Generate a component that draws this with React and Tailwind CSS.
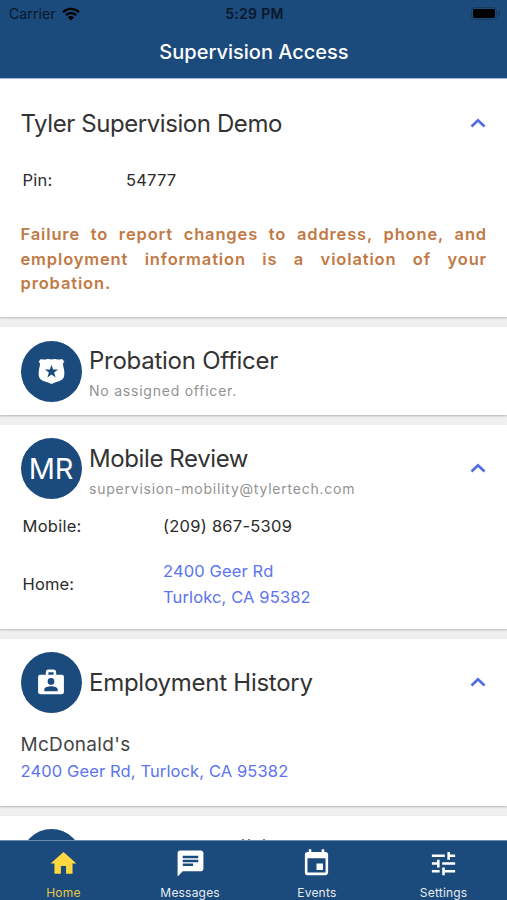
import React from "react";
import { MdChat, MdEvent, MdHome, MdTune } from "react-icons/md";

const PoliceBadgeIcon = () => (
  <svg viewBox="0 0 27 27" className="w-[27px] h-[27px]" fill="white">
    <path
      fillRule="evenodd"
      d="M3 1 C4.8 1.7 7 1.7 8.6 1.2 C10.5 .9 11.5 1.5 13.5 1.5 C15.5 1.5 16.5 .9 18.4 1.2 C20 1.7 22.2 1.7 24 1 L26.4 3.6 C24.9 5 24.8 6.5 25.3 8.3 C26.4 12.5 26.9 16.5 25.7 19.4 C24.2 22.4 20.5 23.2 17.6 24.2 C15.7 24.9 14.5 25.8 13.5 25.8 C12.5 25.8 11.3 24.9 9.4 24.2 C6.5 23.2 2.8 22.4 1.3 19.4 C.1 16.5 .6 12.5 1.7 8.3 C2.2 6.5 2.1 5 .6 3.6Z M13.5 6.8 L11.9 11.5 L6.9 11.6 L10.9 14.6 L9.4 19.4 L13.5 16.5 L17.6 19.4 L16.1 14.6 L20.1 11.6 L15.1 11.5Z"
    />
  </svg>
);

const BriefcaseAccountIcon = () => (
  <svg viewBox="0 0 24 24" className="w-[32px] h-[31px]" fill="white">
    <path
      fillRule="evenodd"
      d="M14 6V4H10V6H14M20 6C21.11 6 22 6.5 22 7.5V19.5C22 20.5 21.11 21 20 21H4C2.89 21 2 20.5 2 19.5V7.5C2 6.5 2.89 6 4 6H8V4C8 2.89 8.89 2 10 2H14C15.11 2 16 2.89 16 4V6H20M17.2 18.8V17.4C17.2 15.7 14.33 14.9 12 14.9S6.8 15.7 6.8 17.4V18.8H17.2M12 8.6A2.6 2.6 0 1 0 12 13.8A2.6 2.6 0 0 0 12 8.6Z"
    />
  </svg>
);

const Chevron = () => (
  <svg viewBox="0 0 16 10" className="w-4 h-[10px] ml-auto mr-[1.5px] mb-[2px]" fill="none">
    <path d="M1.5 8.5L8 2.2L14.5 8.5" stroke="#5069e6" strokeWidth="2.6" />
  </svg>
);

const Avatar = ({ children }) => (
  <div className="w-[61px] h-[61px] shrink-0 rounded-full bg-[#1b4a7c] text-white flex items-center justify-center">
    {children}
  </div>
);

const Card = ({ className, children }) => (
  <section
    className={`bg-white shrink-0 pl-[20.5px] pr-[20px] shadow-[0_1px_2px_rgba(0,0,0,0.25)] ${className}`}
  >
    {children}
  </section>
);

const Title = ({ tracking = "tracking-[-0.26px]", children }) => (
  <h2
    className={`text-[24px] leading-[30px] font-[430] text-[#333] whitespace-nowrap ${tracking}`}
  >
    {children}
  </h2>
);

const Subtitle = ({ children }) => (
  <p className="mt-[5px] text-[14px] leading-5 tracking-[0.77px] text-[#929292] whitespace-nowrap">
    {children}
  </p>
);

const tabs = [
  { label: "Home", Icon: MdHome, color: "text-[#ffd740]" },
  { label: "Messages", Icon: MdChat, color: "text-white" },
  { label: "Events", Icon: MdEvent, color: "text-white" },
  { label: "Settings", Icon: MdTune, color: "text-white" },
];

const App = () => {
  return (
    <div className="w-[507px] h-[900px] flex flex-col overflow-hidden bg-[#f0f0f0] font-['Inter','Liberation_Sans',sans-serif]">
      <header className="h-[79px] shrink-0 bg-[#1b4a7c] border-b border-[#9db6ee]">
        <div className="h-[27px] grid grid-cols-3 items-center pl-[9px] pr-[7px] text-[14px] text-[#08182b]">
          <div className="flex items-center gap-[6px]">
            <span className="tracking-[0.1px]">Carrier</span>
            <svg viewBox="0 0 18 14" className="w-[18px] h-[14px]" fill="none">
              <path
                d="M1 5.2C5.5 .8 12.5 .8 17 5.2M3.8 8.2C6.8 5.3 11.2 5.3 14.2 8.2"
                stroke="black"
                strokeWidth="2.3"
              />
              <path d="M5.8 10.2Q9 7.6 12.2 10.2L9 13.5Z" fill="black" />
            </svg>
          </div>
          <span className="text-center font-semibold tracking-[0.3px]">5:29 PM</span>
          <div className="flex items-center justify-end gap-[1px]">
            <div className="w-[26px] h-[13px] rounded-[4px] border border-[#153b60] p-[1px]">
              <div className="w-full h-full rounded-[2px] bg-black" />
            </div>
            <div className="w-[2px] h-[5px] rounded-r-full bg-[#153b60]" />
          </div>
        </div>
        <h1 className="text-center text-[20px] leading-[51px] font-medium text-white pl-px">
          Supervision Access
        </h1>
      </header>

      <main className="flex-1 min-h-0 overflow-hidden flex flex-col gap-[10px]">
        <Card className="h-[238px] pt-[30px]">
          <div className="flex items-center">
            <Title tracking="tracking-[-0.42px]">Tyler Supervision Demo</Title>
            <Chevron />
          </div>
          <div className="mt-[29px] pl-[2px] flex text-[16.5px] leading-6 tracking-[0.2px] text-[#2b2b2b]">
            <span className="w-[103.5px]">Pin:</span>
            <span>54777</span>
          </div>
          <p className="mt-[30px] text-justify text-[16.5px] leading-[24.5px] font-semibold tracking-[0.85px] text-[#c17a45]">
            Failure to report changes to address, phone, and employment
            information is a violation of your probation.
          </p>
        </Card>

        <Card className="h-[88px] pt-[13.5px]">
          <div className="flex gap-[7.5px]">
            <Avatar>
              <PoliceBadgeIcon />
            </Avatar>
            <div className="pt-[5px]">
              <Title>Probation Officer</Title>
              <Subtitle>No assigned officer.</Subtitle>
            </div>
          </div>
        </Card>

        <Card className="h-[204px] pt-[13px]">
          <div className="flex items-center gap-[7.5px]">
            <Avatar>
              <span className="text-[29px] tracking-[-0.3px]">MR</span>
            </Avatar>
            <div className="pt-[5px]">
              <Title tracking="tracking-[-0.4px]">Mobile Review</Title>
              <Subtitle>supervision-mobility@tylertech.com</Subtitle>
            </div>
            <Chevron />
          </div>
          <div className="mt-[15px] pl-[2px] flex text-[16.5px] leading-6 tracking-[0.25px] text-[#2b2b2b]">
            <span className="w-[140.5px]">Mobile:</span>
            <span>(209) 867-5309</span>
          </div>
          <div className="mt-5 pl-[2px] flex items-center text-[16.5px] leading-[26px] tracking-[0.13px] text-[#2b2b2b]">
            <span className="w-[140.5px]">Home:</span>
            <span className="text-[#5c74ee]">
              2400 Geer Rd
              <br />
              Turlokc, CA 95382
            </span>
          </div>
        </Card>

        <Card className="h-[167px] pt-[13px]">
          <div className="flex items-center gap-[7.5px]">
            <Avatar>
              <BriefcaseAccountIcon />
            </Avatar>
            <Title>Employment History</Title>
            <Chevron />
          </div>
          <p className="mt-[19px] text-[19px] leading-[26px] tracking-[0.3px] text-[#444]">
            McDonald's
          </p>
          <p className="text-[16.5px] leading-[27px] tracking-[0.12px] text-[#5c74ee]">
            2400 Geer Rd, Turlock, CA 95382
          </p>
        </Card>

        {/* next card, mostly scrolled under the tab bar */}
        <Card className="h-[88px] pt-[13px]">
          <div className="flex">
            <Avatar />
            <svg viewBox="0 0 24 2" className="w-6 h-[2px] ml-[160px] mt-[10px]" fill="#777">
              <path d="M0 0H2V2H0ZM6 0H8V2H6ZM21 0H23V2H21Z" />
            </svg>
          </div>
        </Card>
      </main>

      <nav className="h-[60px] shrink-0 grid grid-cols-4 bg-[#1b4a7c] border-t border-[#6f8cab]">
        {tabs.map(({ label, Icon, color }) => (
          <div key={label} className={`flex flex-col items-center pt-[7px] ${color}`}>
            <Icon className="w-[31px] h-[31px]" />
            <span className="mt-[5px] text-[12px] leading-[18px] tracking-[0.2px] opacity-90">
              {label}
            </span>
          </div>
        ))}
      </nav>
    </div>
  );
};

export default App;
